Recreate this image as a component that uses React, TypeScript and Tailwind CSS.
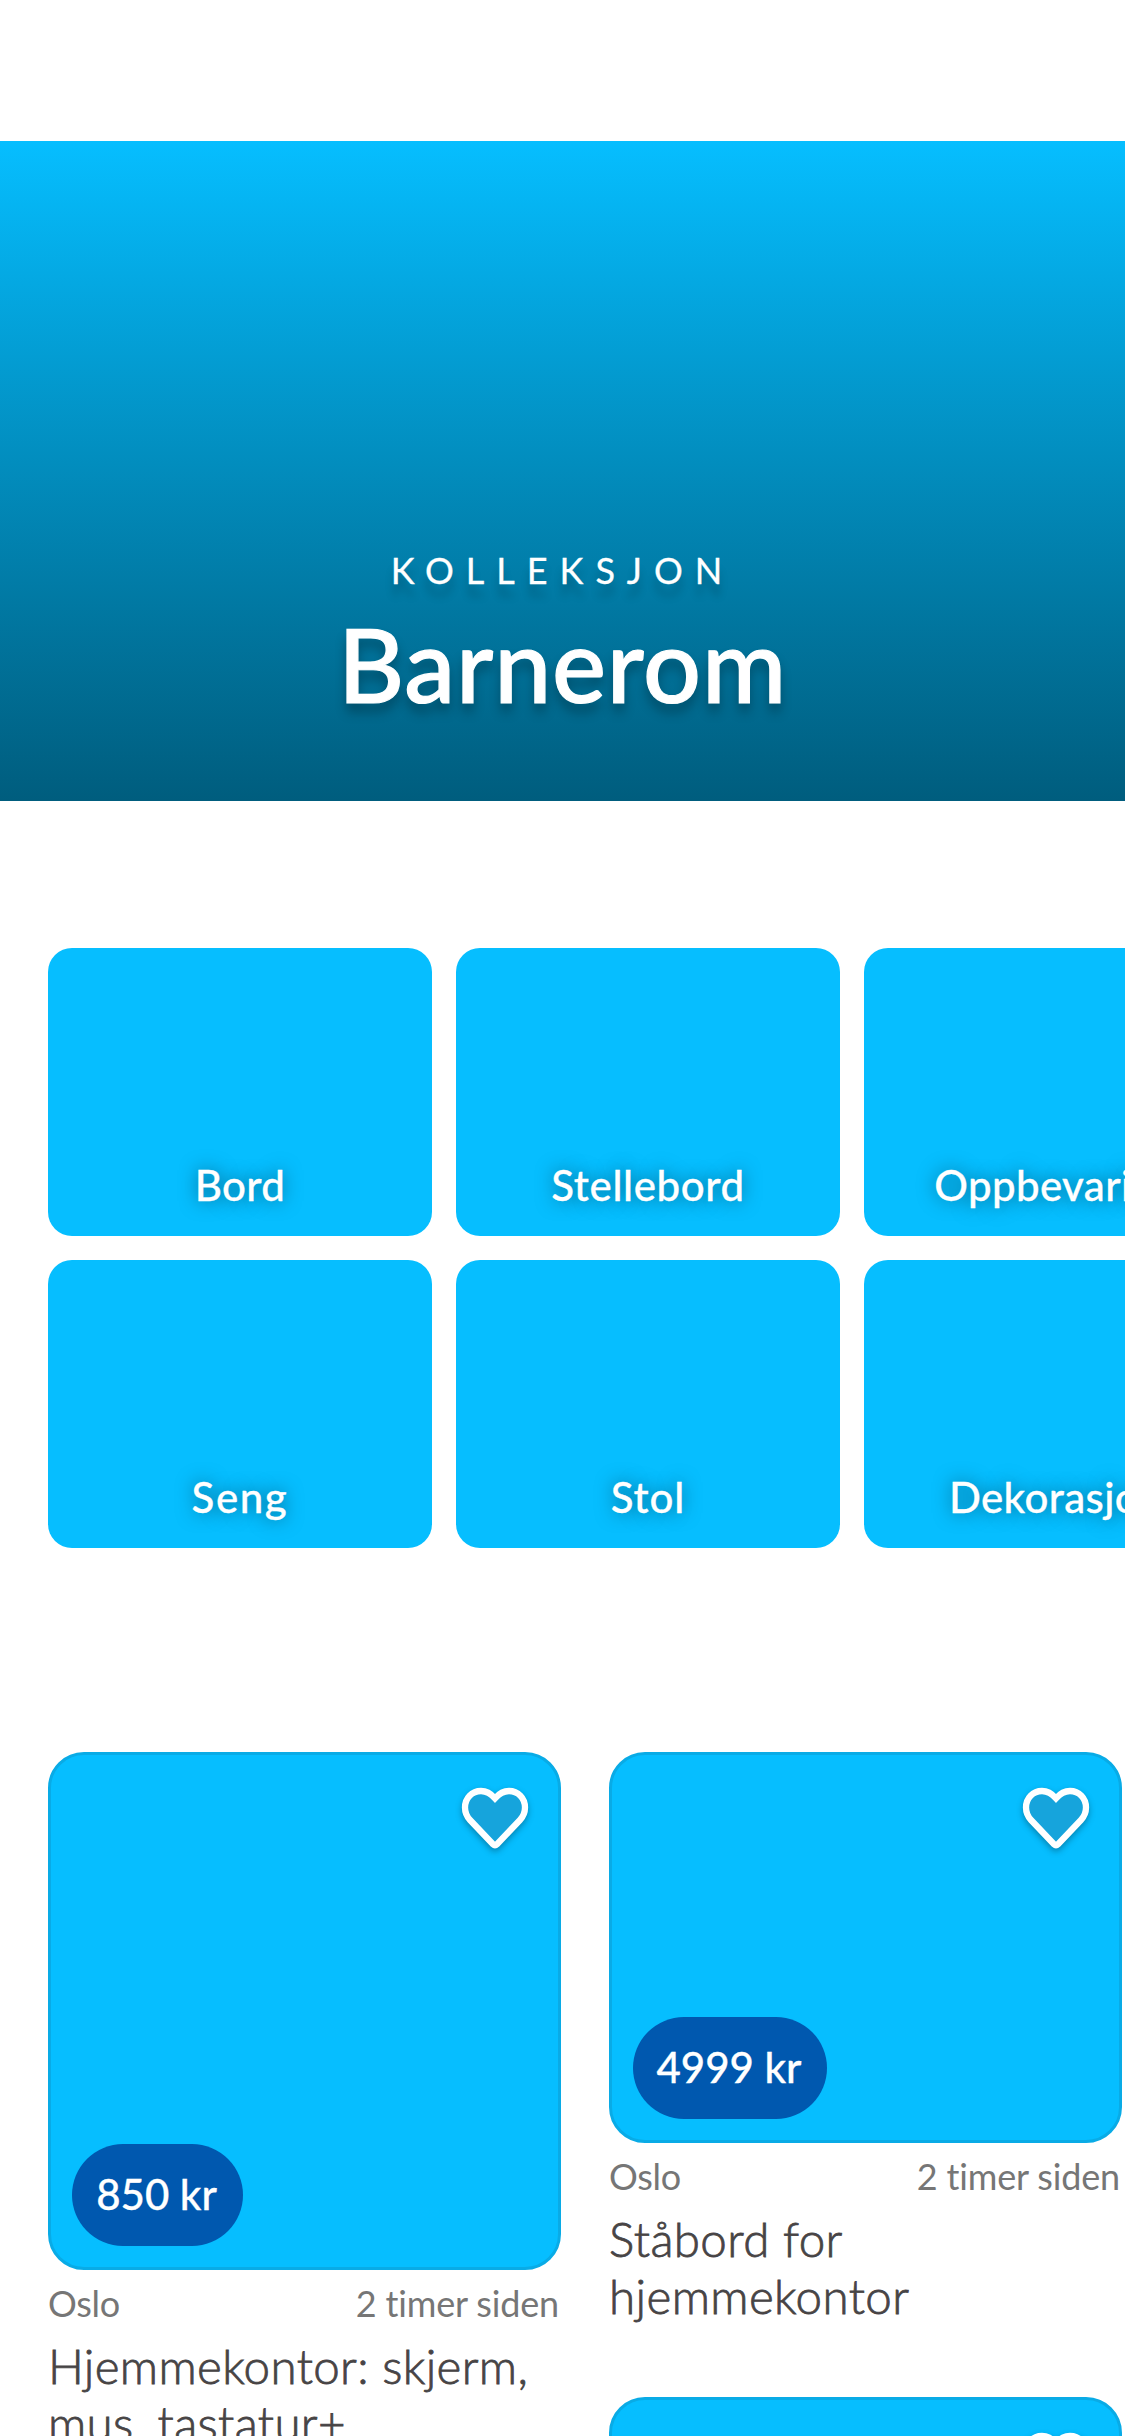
const categories: { label: string; tracking: string }[] = [
  { label: "Bord", tracking: "tracking-[0.3px]" },
  { label: "Stellebord", tracking: "tracking-[0.6px]" },
  { label: "Oppbevaring", tracking: "tracking-[0.4px]" },
  { label: "Seng", tracking: "tracking-[1.6px]" },
  { label: "Stol", tracking: "tracking-[0.9px]" },
  { label: "Dekorasjon", tracking: "tracking-[0.4px]" },
];

interface Listing {
  title: string;
  titleTracking: string;
  price: string;
  place: string;
  time: string;
  photoHeight: string;
  pillWidth: string;
}

const leftListings: Listing[] = [
  {
    title: "Hjemmekontor: skjerm, mus, tastatur+",
    titleTracking: "tracking-[0.35px]",
    price: "850 kr",
    place: "Oslo",
    time: "2 timer siden",
    photoHeight: "h-[518px]",
    pillWidth: "w-[171px]",
  },
];

const rightListings: Listing[] = [
  {
    title: "Ståbord for hjemmekontor",
    titleTracking: "tracking-[0.4px]",
    price: "4999 kr",
    place: "Oslo",
    time: "2 timer siden",
    photoHeight: "h-[391px]",
    pillWidth: "w-[194px]",
  },
];

function Heart() {
  return (
    <svg
      viewBox="0 0 66 62"
      className="absolute top-[33px] right-[30px] h-[62px] w-[66px] overflow-visible drop-shadow-[0_3px_3px_rgba(0,0,0,0.3)]"
      aria-label="Favoritt"
    >
      <path
        d="M33 10.3C29 5.8 24.5 3 19 3C10 3 3 10 3 19.5C3 24.5 4.5 28.2 8 32L31 56.2Q33 58.2 35 56.2L58 32C61.5 28.2 63 24.5 63 19.5C63 10 56 3 47 3C41.5 3 37 5.8 33 10.3Z"
        fill="#16a4dc"
        stroke="#ffffff"
        strokeWidth="6.3"
      />
    </svg>
  );
}

function ListingCard({ item }: { item: Listing }) {
  return (
    <article>
      <div
        className={`relative flex items-end rounded-[36px] border-3 border-[#09abe6] bg-[#06beff] p-[21px] ${item.photoHeight}`}
      >
        <Heart />
        <span
          className={`flex h-[102px] items-center justify-center rounded-full bg-[#0058af] pr-0.5 pb-0.5 text-[42px] leading-none font-medium whitespace-nowrap text-white [-webkit-text-stroke:0.3px_#ffffff] ${item.pillWidth}`}
        >
          {item.price}
        </span>
      </div>
      <div className="mt-3 flex justify-between pr-0.5 text-[36px] leading-[42px] text-[#767676]">
        <span className="tracking-[-0.3px]">{item.place}</span>
        <span className="tracking-[-0.15px]">{item.time}</span>
      </div>
      <h2
        className={`mt-[13px] text-[47.5px] leading-[57px] font-light text-[#474445] [-webkit-text-stroke:0.8px_#474445] ${item.titleTracking}`}
      >
        {item.title}
      </h2>
    </article>
  );
}

export default function App() {
  return (
    <main className="h-[2436px] w-[1125px] overflow-hidden bg-white pt-[141px] font-[Lato,sans-serif]">
      <header className="flex h-[660px] flex-col items-center justify-end bg-linear-to-b from-[#06beff] to-[#005d7e] pb-[76px] text-white">
        <p className="text-[36px] leading-[42px] tracking-[12px] [-webkit-text-stroke:0.3px_#ffffff] [text-shadow:0_12px_9px_rgba(0,0,0,0.2)]">
          KOLLEKSJON
        </p>
        <h1 className="mt-3 text-[102px] leading-[122px] font-medium tracking-[0.8px] [-webkit-text-stroke:1.2px_#ffffff] [text-shadow:0_9px_12px_rgba(0,0,0,0.3)]">
          Barnerom
        </h1>
      </header>

      <section className="mt-[147px] grid grid-cols-[384px_384px_384px] grid-rows-[288px_288px] gap-6 pl-12">
        {categories.map((c) => (
          <div
            key={c.label}
            className="flex items-end justify-center rounded-3xl bg-[#06beff] pb-[26px]"
          >
            <span
              className={`text-[42px] leading-[50px] font-medium text-white [-webkit-text-stroke:0.3px_#ffffff] [text-shadow:0_0_18px_rgba(0,0,0,0.5)] ${c.tracking}`}
            >
              {c.label}
            </span>
          </div>
        ))}
      </section>

      <section className="mt-[204px] grid grid-cols-[513px_513px] gap-12 pl-12">
        <div>
          {leftListings.map((item) => (
            <ListingCard key={item.title} item={item} />
          ))}
        </div>
        <div className="flex flex-col gap-[73px]">
          {rightListings.map((item) => (
            <ListingCard key={item.title} item={item} />
          ))}
          <div className="relative h-[391px] rounded-[36px] border-3 border-[#09abe6] bg-[#06beff]">
            <Heart />
          </div>
        </div>
      </section>
    </main>
  );
}
